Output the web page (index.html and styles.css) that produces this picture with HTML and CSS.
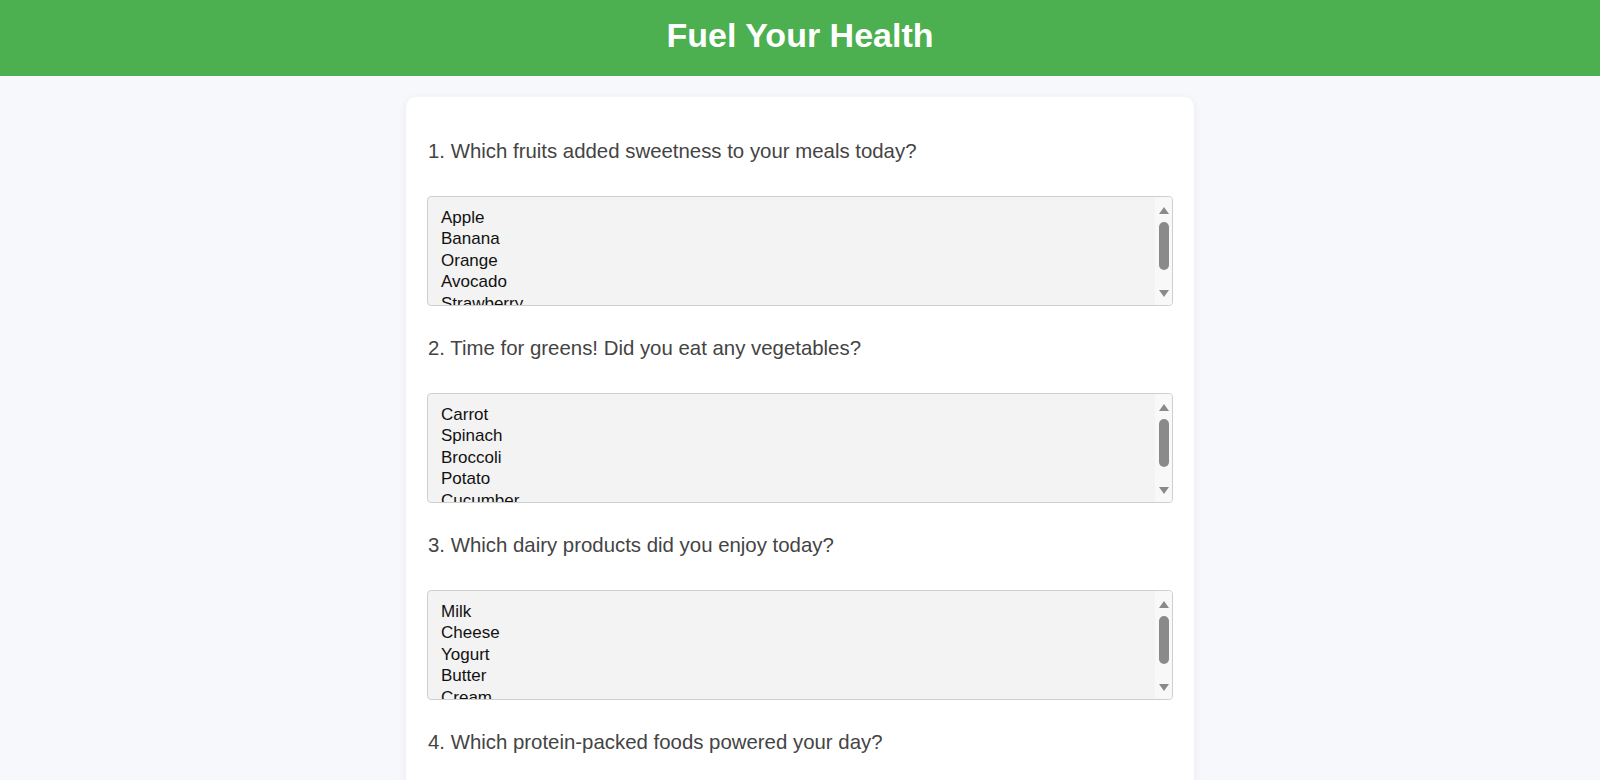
FILE: index.html
```html
<!DOCTYPE html>
<html lang="en">
<head>
<meta charset="utf-8">
<title>Fuel Your Health</title>
<link rel="stylesheet" href="styles.css">
</head>
<body>
<header class="top-bar">
  <h1 class="title">Fuel Your Health</h1>
</header>
<main class="card">
  <section class="question">
    <label class="q-label">1. Which fruits added sweetness to your meals today?</label>
    <div class="listbox">
      <ul class="options">
        <li>Apple</li><li>Banana</li><li>Orange</li><li>Avocado</li><li>Strawberry</li>
      </ul>
      <div class="scrollbar">
        <svg class="arrow" width="10" height="8" viewBox="0 0 10 8"><path d="M5 0 L10 7 L0 7 Z"/></svg>
        <div class="thumb"></div>
        <svg class="arrow" width="10" height="8" viewBox="0 0 10 8"><path d="M0 1 L10 1 L5 8 Z"/></svg>
      </div>
    </div>
  </section>
  <section class="question">
    <label class="q-label">2. Time for greens! Did you eat any vegetables?</label>
    <div class="listbox">
      <ul class="options">
        <li>Carrot</li><li>Spinach</li><li>Broccoli</li><li>Potato</li><li>Cucumber</li>
      </ul>
      <div class="scrollbar">
        <svg class="arrow" width="10" height="8" viewBox="0 0 10 8"><path d="M5 0 L10 7 L0 7 Z"/></svg>
        <div class="thumb"></div>
        <svg class="arrow" width="10" height="8" viewBox="0 0 10 8"><path d="M0 1 L10 1 L5 8 Z"/></svg>
      </div>
    </div>
  </section>
  <section class="question">
    <label class="q-label">3. Which dairy products did you enjoy today?</label>
    <div class="listbox">
      <ul class="options">
        <li>Milk</li><li>Cheese</li><li>Yogurt</li><li>Butter</li><li>Cream</li>
      </ul>
      <div class="scrollbar">
        <svg class="arrow" width="10" height="8" viewBox="0 0 10 8"><path d="M5 0 L10 7 L0 7 Z"/></svg>
        <div class="thumb"></div>
        <svg class="arrow" width="10" height="8" viewBox="0 0 10 8"><path d="M0 1 L10 1 L5 8 Z"/></svg>
      </div>
    </div>
  </section>
  <section class="question">
    <label class="q-label">4. Which protein-packed foods powered your day?</label>
    <div class="listbox">
      <ul class="options">
        <li>Chicken</li><li>Eggs</li><li>Fish</li><li>Beans</li><li>Tofu</li>
      </ul>
      <div class="scrollbar">
        <svg class="arrow" width="10" height="8" viewBox="0 0 10 8"><path d="M5 0 L10 7 L0 7 Z"/></svg>
        <div class="thumb"></div>
        <svg class="arrow" width="10" height="8" viewBox="0 0 10 8"><path d="M0 1 L10 1 L5 8 Z"/></svg>
      </div>
    </div>
  </section>
</main>
</body>
</html>
```

FILE: styles.css
```css
* { box-sizing: border-box; }

html, body {
  margin: 0;
  padding: 0;
}

body {
  background: #f6f8fc;
  font-family: "Liberation Sans", Arial, sans-serif;
  color: #444;
}

.top-bar {
  background: #4caf50;
  height: 76px;
  display: flex;
  align-items: center;
  justify-content: center;
}

.title {
  margin: 0;
  margin-top: -6px;
  color: #fff;
  font-size: 34px;
  font-weight: bold;
  line-height: 1;
}

.card {
  width: 788px;
  margin: 21px auto 40px;
  background: #fff;
  border-radius: 10px;
  box-shadow: 0 2px 10px rgba(0, 0, 0, 0.06);
  padding: 12px 21px 30px;
}

.question {
  display: flex;
  flex-direction: column;
}

.q-label {
  display: block;
  font-size: 20.4px;
  line-height: 24px;
  margin: 30px 1px 33px;
  color: #444;
}

.listbox {
  height: 110px;
  border: 1px solid #cfcfcf;
  border-radius: 4px;
  background: #f3f3f3;
  display: flex;
  overflow: hidden;
}

.options {
  list-style: none;
  margin: 0;
  flex: 1;
  padding: 10px 13px 0;
  font-size: 17px;
  line-height: 21.4px;
  color: #111;
  overflow: hidden;
}

.scrollbar {
  width: 17px;
  background: #f8f8f8;
  display: flex;
  flex-direction: column;
  align-items: center;
  padding: 10px 0 8px;
}

.arrow {
  fill: #8a8a8a;
  flex: none;
}

.thumb {
  width: 10px;
  height: 48px;
  border-radius: 5px;
  background: #8a8a8a;
  margin: 7px 0 auto;
}
```
